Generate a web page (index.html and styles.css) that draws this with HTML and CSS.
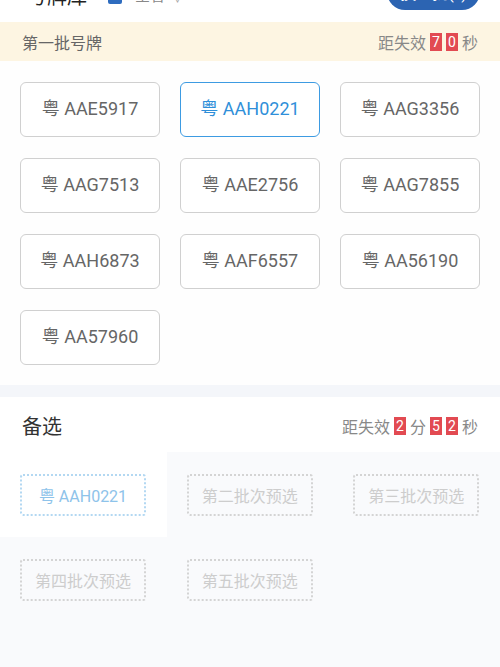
FILE: index.html
```html
<!DOCTYPE html>
<html lang="zh-CN">
<head>
<meta charset="utf-8">
<title>号牌库</title>
<link rel="stylesheet" href="styles.css">
</head>
<body>
<header class="topbar">
  <div class="title">号牌库</div>
  <div class="region"><span class="check"></span><span class="region-text">全省</span><span class="chev">∨</span></div>
  <button class="swap">换一批(?)</button>
</header>

<section class="batch">
  <div class="notice">
    <span class="notice-title">第一批号牌</span>
    <span class="timer">距失效 <b class="digit">7</b> <b class="digit">0</b> 秒</span>
  </div>
  <div class="plates">
    <div class="plate">粤 AAE5917</div>
    <div class="plate active">粤 AAH0221</div>
    <div class="plate">粤 AAG3356</div>
    <div class="plate">粤 AAG7513</div>
    <div class="plate">粤 AAE2756</div>
    <div class="plate">粤 AAG7855</div>
    <div class="plate">粤 AAH6873</div>
    <div class="plate">粤 AAF6557</div>
    <div class="plate">粤 AA56190</div>
    <div class="plate">粤 AA57960</div>
  </div>
</section>

<div class="divider"></div>

<section class="backup">
  <div class="backup-head">
    <span class="backup-title">备选</span>
    <span class="timer">距失效 <b class="digit">2</b> 分 <b class="digit">5</b> <b class="digit">2</b> 秒</span>
  </div>
  <div class="slots">
    <div class="slot filled"><div class="slot-box">粤 AAH0221</div></div>
    <div class="slot"><div class="slot-box">第二批次预选</div></div>
    <div class="slot"><div class="slot-box">第三批次预选</div></div>
    <div class="slot"><div class="slot-box">第四批次预选</div></div>
    <div class="slot"><div class="slot-box">第五批次预选</div></div>
  </div>
</section>
</body>
</html>
```

FILE: styles.css
```css
* { box-sizing: border-box; }
html, body { margin: 0; padding: 0; }
body {
  width: 500px;
  height: 667px;
  overflow: hidden;
  background: #f9fafc;
  font-family: "Roboto", "Noto Sans CJK SC", sans-serif;
  color: #333;
}
.topbar {
  height: 22px;
  background: #fff;
  display: flex;
  align-items: flex-end;
  padding: 0 20px 0 27px;
  overflow: hidden;
}
.title {
  font-size: 20px;
  line-height: 20px;
  color: #222;
  margin-bottom: 15px;
}
.region {
  display: flex;
  align-items: flex-end;
  margin-left: 21px;
  margin-bottom: 18px;
}
.check {
  width: 14px;
  height: 14px;
  background: #2e6cbf;
  border-radius: 2px;
}
.region-text { font-size: 15px; line-height: 15px; color: #888; margin-left: 13px; }
.chev { font-size: 13px; line-height: 13px; color: #aaa; margin-left: 6px; }
.swap {
  margin-left: auto;
  margin-bottom: 12px;
  width: 93px;
  height: 36px;
  border: none;
  border-radius: 18px;
  background: #2c64b2;
  color: #fff;
  font-family: inherit;
  font-size: 16px;
}
.batch { background: #fefefe; padding-bottom: 20px; }
.notice {
  height: 39px;
  background: #fdf5e2;
  display: flex;
  align-items: center;
  justify-content: space-between;
  padding: 0 22px;
}
.notice-title { font-size: 16px; color: #666; }
.timer { font-size: 16px; color: #888; display: flex; align-items: center; gap: 4px; }
.digit {
  display: inline-block;
  width: 12px;
  height: 18px;
  line-height: 18px;
  text-align: center;
  background: #e24a52;
  color: #fff;
  font-weight: normal;
  font-size: 14px;
}
.plates {
  display: grid;
  grid-template-columns: repeat(3, 140px);
  column-gap: 20px;
  row-gap: 21px;
  padding: 21px 20px 0;
}
.plate {
  height: 55px;
  border: 1.5px solid #d0d0d0;
  border-radius: 6px;
  display: flex;
  align-items: center;
  justify-content: center;
  font-size: 18px;
  line-height: 18px;
  padding-bottom: 2px;
  color: #666;
  background: #fff;
}
.plate.active { border-color: #3d9be2; color: #2f8fd9; }
.divider { height: 12px; background: #f4f6fa; }
.backup-head {
  height: 55px;
  background: #fff;
  display: flex;
  align-items: center;
  justify-content: space-between;
  padding: 2px 22px 0;
}
.backup-title { font-size: 20px; color: #333; }
.slots {
  display: grid;
  grid-template-columns: repeat(3, 1fr);
}
.slot { height: 85px; padding: 22px 0 0 20px; }
.slot.filled { background: #fff; }
.slot-box {
  width: 126px;
  height: 42px;
  border: 2px dotted #d4d4d4;
  border-radius: 3px;
  display: flex;
  align-items: center;
  justify-content: center;
  font-size: 16px;
  color: #cdcdcd;
}
.slot.filled .slot-box { border-color: #b3d8f2; color: #8ec3ea; }
```
